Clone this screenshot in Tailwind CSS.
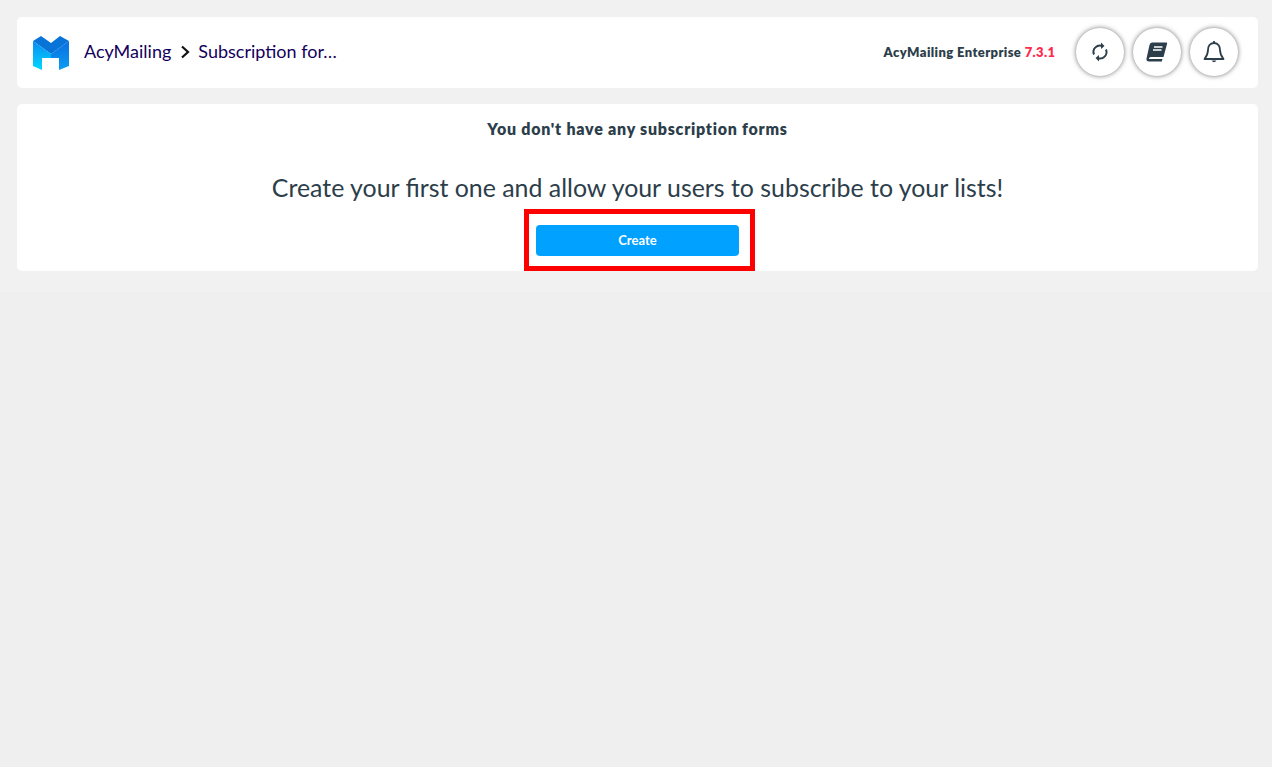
<!DOCTYPE html>
<html lang="en">
  <head>
    <meta charset="UTF-8" />
    <title>Subscription forms - AcyMailing</title>
    <script src="https://cdn.jsdelivr.net/npm/@tailwindcss/browser@4"></script>
  </head>
  <body class="bg-[#efefef] min-h-screen font-['Lato',sans-serif] text-[#2c3e4a]">
    <div class="pl-[17px] pr-[14px] pt-[17px] pb-[21px] bg-[#f1f1f1]">
      <!-- top bar -->
      <header class="h-[71px] bg-white rounded-[5px] flex items-center pl-[16px] pr-[20.5px] mb-[16px]">
        <svg class="w-[36px] h-[34px] shrink-0" viewBox="0 0 36 34">
          <defs>
            <linearGradient id="side" x1="0" y1="0" x2="0" y2="1">
              <stop offset="0" stop-color="#0a8cf0" />
              <stop offset="1" stop-color="#00d8ff" />
            </linearGradient>
            <linearGradient id="right" x1="0" y1="0" x2="0" y2="1">
              <stop offset="0" stop-color="#0a6fe0" />
              <stop offset="1" stop-color="#0a9cf2" />
            </linearGradient>
          </defs>
          <path d="M0 5L8 0L18 7L27 0L36 5L18 18Z" fill="#0874d8" />
          <path d="M0 5L18 18V22H9V34L0 30Z" fill="url(#side)" />
          <path d="M36 5L18 18V22H26V34L36 30Z" fill="url(#right)" />
        </svg>
        <nav class="flex items-center ml-[15px] -mt-[2px] text-[18px] text-[#14005c]">
          <span>AcyMailing</span>
          <svg class="w-[10px] h-[14px] mx-[9px] mt-[1px]" viewBox="0 0 10 14" fill="none" stroke="#111" stroke-width="2.2">
            <path d="M2 1.5L8 7L2 12.5" />
          </svg>
          <span class="-ml-[1px]">Subscription for…</span>
        </nav>
        <div class="ml-auto flex items-center">
          <span class="text-[13px] font-extrabold tracking-[0.4px] mr-[20px]">AcyMailing Enterprise <span class="text-[#ff2b4e]">7.3.1</span></span>
          <div class="flex gap-[9px] -mt-[1px]">
            <button class="w-[48px] h-[48px] rounded-full bg-white shadow-[0_0_5px_rgba(0,0,0,0.55)] flex items-center justify-center">
              <svg class="w-[18px] h-[20px]" viewBox="0 0 18 20" fill="none" stroke="#2c3e4a" stroke-width="2">
                <path d="M3 12.5A6.5 6.5 0 0 1 11.5 4" />
                <path d="M15 7.5A6.5 6.5 0 0 1 6.5 16" />
                <path d="M10 0.5L13.5 4L10 7Z" fill="#2c3e4a" stroke="none" />
                <path d="M8 13L4.5 16L8 19.5Z" fill="#2c3e4a" stroke="none" />
              </svg>
            </button>
            <button class="w-[48px] h-[48px] rounded-full bg-white shadow-[0_0_5px_rgba(0,0,0,0.55)] flex items-center justify-center">
              <svg class="w-[22px] h-[20px]" viewBox="0 0 22 20">
                <path d="M6 0.5H20.5Q21.5 0.5 21 2L17.5 15H5Q3 15 2.8 17H16.5L15.8 19.5H3Q0 19.5 0.5 16.5L3.5 3Q4 0.5 6 0.5Z" fill="#2c3e4a" />
                <path d="M8 5H16.5M7 8H15.5" stroke="#fff" stroke-width="1.5" />
              </svg>
            </button>
            <button class="w-[48px] h-[48px] rounded-full bg-white shadow-[0_0_5px_rgba(0,0,0,0.55)] flex items-center justify-center">
              <svg class="w-[22px] h-[24px]" viewBox="0 0 22 24" fill="none" stroke="#2c3e4a" stroke-width="1.8">
                <path d="M11 3C6.5 3 5 6.5 5 10C5 14.5 3.5 16.5 1.5 19H20.5C18.5 16.5 17 14.5 17 10C17 6.5 15.5 3 11 3Z" stroke-linejoin="round" />
                <path d="M11 3V1" />
                <path d="M8.5 20.5Q11 24 13.5 20.5Z" fill="#2c3e4a" stroke="none" />
              </svg>
            </button>
          </div>
        </div>
      </header>

      <!-- empty state card -->
      <main class="relative h-[167px] bg-white rounded-[5px] flex flex-col items-center">
        <h2 class="mt-[15px] text-[16px] leading-[20px] font-extrabold tracking-[0.75px]">You don't have any subscription forms</h2>
        <p class="mt-[30px] text-[24.9px] leading-[36px]">Create your first one and allow your users to subscribe to your lists!</p>
        <button class="mt-[20px] w-[203px] h-[31px] bg-[#00a1ff] rounded-[4px] text-white text-[13px] font-bold">Create</button>
        <!-- highlight drawn over the screenshot -->
        <div class="absolute left-[507px] top-[105px] w-[231px] h-[62px] border-[5px] border-[#ff0000]"></div>
      </main>
    </div>
  </body>
</html>
